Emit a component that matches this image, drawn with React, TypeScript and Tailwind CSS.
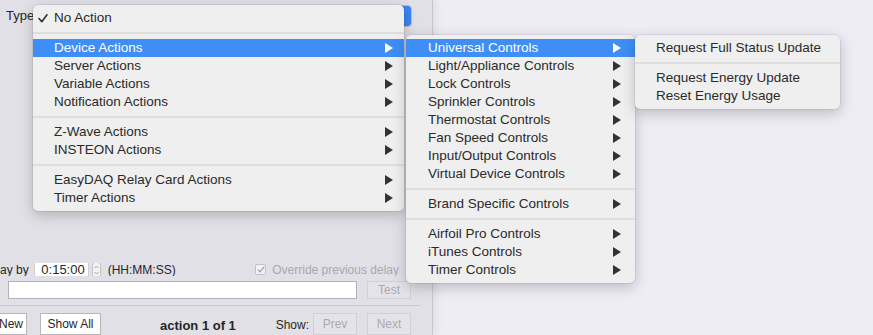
type Item = {
  label?: string;
  sep?: boolean;
  arrow?: boolean;
  active?: boolean;
  check?: boolean;
};

const mainItems: Item[] = [
  { label: "No Action", check: true },
  { sep: true },
  { label: "Device Actions", arrow: true, active: true },
  { label: "Server Actions", arrow: true },
  { label: "Variable Actions", arrow: true },
  { label: "Notification Actions", arrow: true },
  { sep: true },
  { label: "Z-Wave Actions", arrow: true },
  { label: "INSTEON Actions", arrow: true },
  { sep: true },
  { label: "EasyDAQ Relay Card Actions", arrow: true },
  { label: "Timer Actions", arrow: true },
];

const deviceItems: Item[] = [
  { label: "Universal Controls", arrow: true, active: true },
  { label: "Light/Appliance Controls", arrow: true },
  { label: "Lock Controls", arrow: true },
  { label: "Sprinkler Controls", arrow: true },
  { label: "Thermostat Controls", arrow: true },
  { label: "Fan Speed Controls", arrow: true },
  { label: "Input/Output Controls", arrow: true },
  { label: "Virtual Device Controls", arrow: true },
  { sep: true },
  { label: "Brand Specific Controls", arrow: true },
  { sep: true },
  { label: "Airfoil Pro Controls", arrow: true },
  { label: "iTunes Controls", arrow: true },
  { label: "Timer Controls", arrow: true },
];

const universalItems: Item[] = [
  { label: "Request Full Status Update" },
  { sep: true },
  { label: "Request Energy Update" },
  { label: "Reset Energy Usage" },
];

function Arrow({ white }: { white?: boolean }) {
  return (
    <svg width="8" height="10" viewBox="0 0 8 10" className="shrink-0">
      <polygon points="0,0 8,5 0,10" fill={white ? "#ffffff" : "#333333"} />
    </svg>
  );
}

function Check() {
  return (
    <svg width="10" height="9" viewBox="0 0 10 9">
      <path d="M1 4.6 L3.8 7.8 L9 0.8" fill="none" stroke="#2b2b2b" strokeWidth="1.5" strokeLinecap="round" strokeLinejoin="round" />
    </svg>
  );
}

function Menu({
  items,
  className,
  rowClass,
  checkColumn,
}: {
  items: Item[];
  className: string;
  rowClass: string;
  checkColumn?: boolean;
}) {
  return (
    <div
      className={`absolute rounded-[5px] bg-[#efefef] py-[4px] text-[13.5px] shadow-[0_4px_14px_rgba(0,0,0,0.22),0_0_0_0.5px_rgba(0,0,0,0.12)] ${className}`}
    >
      {items.map((it, i) =>
        it.sep ? (
          <div key={i} className="flex h-[12px] items-center">
            <div className="h-[2px] w-full bg-[#dedede]" />
          </div>
        ) : (
          <div
            key={i}
            className={`flex h-[18px] items-center ${rowClass} ${it.active ? "bg-[#3e8ef6] text-white" : "text-[#2a2a2a]"}`}
          >
            {checkColumn && <span className="flex w-[16px] items-center">{it.check && <Check />}</span>}
            <span className="flex-1 whitespace-nowrap">{it.label}</span>
            {it.arrow && <Arrow white={it.active} />}
          </div>
        )
      )}
    </div>
  );
}

export default function App() {
  return (
    <div className="relative flex h-[335px] w-[873px] overflow-hidden bg-[#eeecf5] font-['Liberation_Sans',Arial,sans-serif] text-[#262626]">
      {/* window behind the menus */}
      <div className="flex h-full w-[433px] shrink-0 flex-col border-r border-[#c9c7ce] bg-[#e2e0e7] shadow-[3px_0_8px_rgba(0,0,0,0.07)]">
        <div className="mt-[5px] flex h-[22px] items-center pl-[6px] pr-[20px] text-[13px]">
          <span>Type</span>
          <div className="ml-[4px] flex h-[22px] flex-1 overflow-hidden rounded-[4px] border border-[#c0bec5] bg-white">
            <div className="flex-1" />
            <div className="flex w-[18px] items-center justify-center bg-[#3b86f3] text-[9px] leading-[8px] text-white">
              ⌃
            </div>
          </div>
        </div>

        <div className="mt-[236px] flex h-[19px] items-center overflow-hidden pr-[33px] text-[12px]">
          <span className="whitespace-nowrap">ay by</span>
          <div className="ml-[6px] flex h-[19px] w-[53px] items-center justify-end bg-white pr-[3px] text-[13px] shadow-[0_0_0_0.5px_rgba(0,0,0,0.15)]">
            0:15:00
          </div>
          <div className="ml-[4px] flex h-[18px] w-[9px] flex-col items-center justify-center rounded-full border border-[#c3c1c8] bg-[#f3f2f6]">
            <svg width="5" height="12" viewBox="0 0 5 12">
              <path d="M0.5 4 L2.5 2 L4.5 4 M0.5 8 L2.5 10 L4.5 8" fill="none" stroke="#9a99a0" strokeWidth="0.9" />
            </svg>
          </div>
          <span className="ml-[7px] whitespace-nowrap">(HH:MM:SS)</span>
          <div className="ml-auto flex items-center">
            <div className="flex h-[11px] w-[11px] items-center justify-center rounded-[2px] border border-[#c2c0c7] bg-[#f2f1f5]">
              <svg width="8" height="7" viewBox="0 0 8 7">
                <path d="M1 3.6 L3 5.8 L7 1" fill="none" stroke="#a3a2a8" strokeWidth="1.3" />
              </svg>
            </div>
            <span className="ml-[6px] whitespace-nowrap text-[#a9a8ad]">Override previous delay</span>
          </div>
        </div>

        <div className="mt-[5px] flex h-[18px] items-center pl-[8px] pr-[21px] text-[12px]">
          <div className="h-full flex-1 border border-[#b3b1b7] bg-white" />
          <div className="ml-[10px] flex h-full w-[44px] items-center justify-center border border-[#d2d0d6] bg-[#e5e3e9] text-[#aaa9ae]">
            Test
          </div>
        </div>

        <div className="mr-[12px] mt-[6px] h-px bg-[#cbc9d0]" />

        <div className="mt-[7px] flex h-[22px] items-start pr-[21px] text-[12px]">
          <div className="ml-[-13px] flex h-[22px] w-[40px] items-center justify-end border border-[#b8b6bc] bg-white pr-[3px]">
            New
          </div>
          <div className="ml-[13px] flex h-[22px] w-[61px] items-center justify-center border border-[#b8b6bc] bg-white">
            Show All
          </div>
          <span className="ml-[59px] mt-[3px] whitespace-nowrap text-[13px] font-bold">action 1 of 1</span>
          <div className="ml-auto flex items-start">
            <span className="mr-[4px] mt-[3px]">Show:</span>
            <div className="flex h-[22px] w-[44px] items-center justify-center border border-[#d2d0d6] bg-[#e5e3e9] text-[#aaa9ae]">
              Prev
            </div>
            <div className="ml-[10px] flex h-[22px] w-[44px] items-center justify-center border border-[#d2d0d6] bg-[#e5e3e9] text-[#aaa9ae]">
              Next
            </div>
          </div>
        </div>
      </div>
      <div className="flex-1" />

      {/* open menus */}
      <Menu items={mainItems} className="left-[33px] top-[5px] w-[371px]" rowClass="pl-[5px] pr-[11px]" checkColumn />
      <Menu items={deviceItems} className="left-[406px] top-[35px] w-[229px]" rowClass="pl-[22px] pr-[14px]" />
      <Menu items={universalItems} className="left-[635px] top-[35px] w-[205px]" rowClass="pl-[21px] pr-[14px]" />
    </div>
  );
}
